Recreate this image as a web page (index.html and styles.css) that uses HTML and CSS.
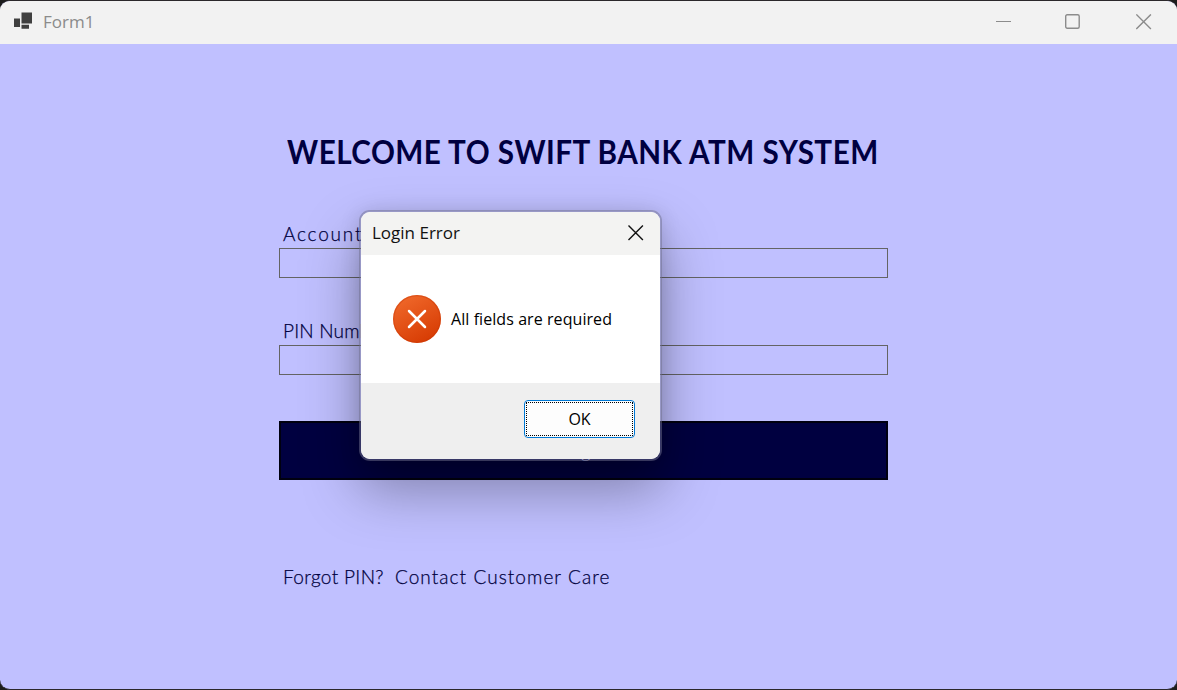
FILE: index.html
```html
<!DOCTYPE html>
<html lang="en">
<head>
<meta charset="utf-8">
<title>Form1</title>
<link rel="stylesheet" href="styles.css">
</head>
<body>
<div class="window">
  <header class="titlebar">
    <svg class="app-icon" width="20" height="18" viewBox="0 0 20 18"><g fill="#404040"><path d="M8.5 0.5h10.5v11H8.5zM1 6.5h6v8.5H1zM8.5 12.7h7.500v4H8.5z"/></g></svg>
    <span class="caption">Form1</span>
    <div class="controls">
      <svg width="16" height="16" viewBox="0 0 16 16"><path d="M1 7.5h15" stroke="#8c8c8c" fill="none"/></svg>
      <svg width="16" height="16" viewBox="0 0 16 16"><rect x="0.7" y="0.8" width="13.5" height="13.5" rx="1.5" stroke="#8c8c8c" stroke-width="1.4" fill="none"/></svg>
      <svg width="16" height="16" viewBox="0 0 16 16"><path d="M.3.4l14.6 14.6M14.9.4L.3 15" stroke="#8c8c8c" stroke-width="1.4" fill="none"/></svg>
    </div>
  </header>
  <main class="form">
    <h1 class="heading">WELCOME TO SWIFT BANK ATM SYSTEM</h1>
    <label class="label account" for="account">Account Number</label>
    <input class="field" id="account" type="text">
    <label class="label pin" for="pin">PIN Number</label>
    <input class="field" id="pin" type="password">
    <button class="login">Login</button>
    <p class="help">Forgot PIN?&nbsp; <span class="contact">Contact Customer Care</span></p>
  </main>
</div>
<div class="dialog" role="alertdialog">
  <div class="dialog-title">
    <span class="dialog-name">Login Error</span>
    <svg width="16" height="16" viewBox="0 0 16 16"><path d="M.5.500l14.4 14.4M14.900.5L.5 14.900" stroke="#111" stroke-width="1.4" fill="none"/></svg>
  </div>
  <div class="dialog-body">
    <svg width="48" height="48" viewBox="0 0 48 48">
      <defs><linearGradient id="red" x1="0.2" y1="0" x2="0.75" y2="1"><stop offset="0" stop-color="#f0692b"/><stop offset="1" stop-color="#d63a02"/></linearGradient></defs>
      <circle cx="24" cy="24" r="24" fill="url(#red)"/>
      <circle cx="24" cy="24" r="23.3" fill="none" stroke="#c83806" stroke-opacity=".4" stroke-width="1.2"/>
      <path d="M16 16l16 16M32 16L16 32" stroke="#fff" stroke-width="2.5" stroke-linecap="round"/>
    </svg>
    <span class="message">All fields are required</span>
  </div>
  <div class="dialog-footer"><button class="ok"><span class="focus"><span class="ok-text">OK</span></span></button></div>
</div>
</body>
</html>
```
FILE: styles.css
```css
* { box-sizing: border-box; }
body { margin: 0; height: 690px; overflow: hidden; background: #1c1c1c; font-family: "Open Sans", "Noto Sans", sans-serif; }
svg { display: block; flex: none; }
.window { height: 690px; border-top: 1px solid #2b282b; border-bottom: 1px solid #2b282b; border-radius: 10px; overflow: hidden; background: #c0c0ff; }
.titlebar { height: 43px; display: flex; align-items: center; padding: 0 25px 2px 13px; background: #f2f2f2; }
.app-icon { margin-top: -1px; }
.caption { margin-left: 10px; font-size: 17px; line-height: 22px; color: #8b8b8b; }
.controls { margin-left: auto; display: flex; gap: 54px; }
.controls svg:nth-child(2) { margin-right: 1px; }
.form { width: 609px; margin-left: 279px; padding-top: 84px; display: flex; flex-direction: column; font-family: Lato, "Open Sans", sans-serif; color: #000040; }
.heading { margin: 0 0 0 8px; height: 48px; font-size: 32px; line-height: 47px; font-weight: 700; letter-spacing: .5px; white-space: nowrap; transform: scaleX(.927); transform-origin: left; }
.label { height: 28px; margin-left: 4px; font-size: 19px; line-height: 28px; font-weight: 300; letter-spacing: 1.8px; white-space: nowrap; -webkit-text-stroke: .25px #000040; }
.account { margin-top: 44px; }
.pin { margin-top: 39px; letter-spacing: .2px; }
.field { width: 609px; height: 30px; padding: 0 6px; border: 1px solid #646464; border-radius: 0; background: transparent; outline: none; }
.login { width: 609px; height: 59px; margin-top: 46px; border: 2px solid #000010; background: #000040; color: #c0c0ff; font: 300 19px Lato, sans-serif; }
.help { margin: 83px 0 0 4px; font-size: 19px; line-height: 27px; font-weight: 300; letter-spacing: .35px; white-space: nowrap; -webkit-text-stroke: .25px #000040; }
.contact { letter-spacing: 1.07px; }
.dialog { position: absolute; left: 359px; top: 210px; width: 303px; height: 251px; display: flex; flex-direction: column; border: 2px solid rgba(112, 112, 142, .5); border-radius: 11px; overflow: hidden; background: #fff; background-clip: padding-box; box-shadow: 0 28px 56px rgba(0, 0, 0, .34), 0 2px 20px rgba(0, 0, 0, .13); }
.dialog-title { height: 43px; display: flex; align-items: center; justify-content: space-between; padding: 0 16px 2px 11px; background: #f3f3f2; }
.dialog-name { font-size: 17px; line-height: 24px; color: #111; }
.dialog-body { height: 128px; display: flex; align-items: center; padding-left: 32px; gap: 10px; }
.message { font-size: 16px; letter-spacing: .07px; color: #000; white-space: nowrap; }
.dialog-footer { flex: 1; display: flex; justify-content: flex-end; padding: 17px 25px 0 0; background: #efefef; }
.ok { width: 111px; height: 38px; padding: 1px; border: 1px solid #0078d4; border-radius: 4px; background: #fdfdfd; font: 16px "Open Sans", sans-serif; color: #000; }
.focus { display: flex; height: 100%; align-items: center; justify-content: center; border: 1px dotted #000; }
```
